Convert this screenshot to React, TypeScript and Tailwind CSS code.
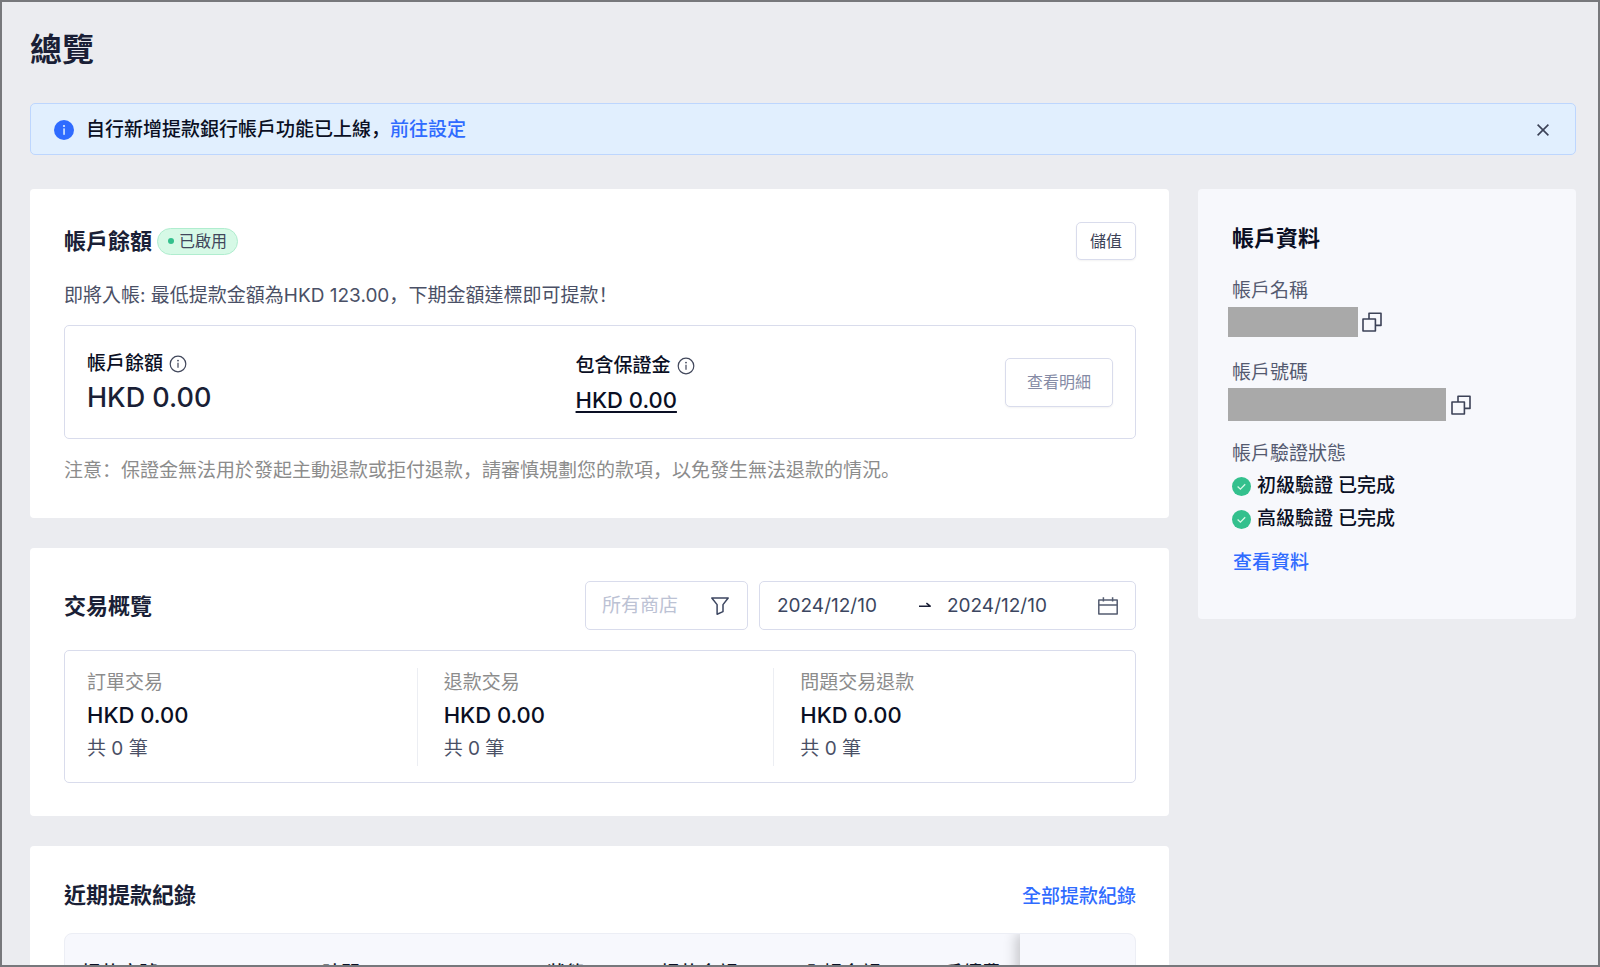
import type { ReactNode } from 'react';

const stats = [
  { label: '訂單交易', amount: 'HKD 0.00', count: '共 0 筆' },
  { label: '退款交易', amount: 'HKD 0.00', count: '共 0 筆' },
  { label: '問題交易退款', amount: 'HKD 0.00', count: '共 0 筆' },
];

function Punct({ children }: { children: ReactNode }) {
  return <span className="font-['Noto_Sans_CJK_SC',sans-serif] leading-none">{children}</span>;
}

function InfoFilledIcon() {
  return (
    <svg viewBox="0 0 20 20" className="h-5 w-5 shrink-0" aria-hidden="true">
      <circle cx="10" cy="10" r="10" fill="#2f6bff" />
      <circle cx="10" cy="6" r="1.1" fill="#e1effe" />
      <rect x="9.3" y="8.4" width="1.5" height="6.4" fill="#e1effe" />
    </svg>
  );
}

function InfoIcon() {
  return (
    <svg viewBox="0 0 18 18" className="h-[18px] w-[18px] shrink-0" fill="none" aria-hidden="true">
      <circle cx="9" cy="9" r="7.8" stroke="#41475b" strokeWidth="1.2" />
      <circle cx="9" cy="5.6" r="0.9" fill="#41475b" />
      <path d="M9 7.8v5" stroke="#41475b" strokeWidth="1.2" />
    </svg>
  );
}

function CloseIcon() {
  return (
    <svg viewBox="0 0 12 12" className="h-3 w-3" fill="none" aria-hidden="true">
      <path d="M.6.6l10.8 10.8M11.4.6L.6 11.4" stroke="#3c4257" strokeWidth="1.6" />
    </svg>
  );
}

function FilterIcon() {
  return (
    <svg viewBox="0 0 18 18" className="pointer-events-none h-[18px] w-[18px] shrink-0" fill="none" aria-hidden="true">
      <path d="M.8 1h16.4L12 7.6v7L6.1 17.2V7.6L.8 1z" stroke="#3c4660" strokeWidth="1.5" strokeLinejoin="round" />
    </svg>
  );
}

function CalendarIcon() {
  return (
    <svg viewBox="0 0 20 18" className="h-[18px] w-5 shrink-0" fill="none" aria-hidden="true">
      <path d="M.8 2.9h18.4v14.2H.8zM.8 8.1h18.4M5.4.2v4.2M14.6.2v4.2" stroke="#545c70" strokeWidth="1.5" strokeLinejoin="round" />
    </svg>
  );
}

function ArrowIcon() {
  return (
    <svg viewBox="0 0 13 8" className="h-2 w-[13px] shrink-0" fill="none" aria-hidden="true">
      <path d="M0 4.2h11.2L7.4 1.2" stroke="#1a1f36" strokeWidth="1.5" strokeLinejoin="round" />
    </svg>
  );
}

function CopyIcon() {
  return (
    <svg viewBox="0 0 20 20" className="h-5 w-5" fill="none" aria-hidden="true">
      <path d="M1 7h12.4v12H1zM7 7V1.2h12v12.2h-5.6" stroke="#3c4257" strokeWidth="1.6" strokeLinejoin="round" />
    </svg>
  );
}

function CheckIcon() {
  return (
    <svg viewBox="0 0 19 19" className="h-[19px] w-[19px] shrink-0" fill="none" aria-hidden="true">
      <circle cx="9.5" cy="9.5" r="9.5" fill="#33c08d" />
      <path d="M5.6 9.6l2.8 2.6 4.8-4.9" stroke="#d6f9e6" strokeWidth="1.3" />
    </svg>
  );
}

function Card({ children }: { children: ReactNode }) {
  return <section className="rounded bg-white py-[33px] pr-[33px] pl-[34px]">{children}</section>;
}

function CardTitle({ children }: { children: ReactNode }) {
  return <h2 className="text-[22px] leading-8 font-semibold text-[#1a1f36]">{children}</h2>;
}

export default function App() {
  return (
    <div className="h-screen overflow-hidden border-2 border-[#77787c] bg-[#ebecf0] pr-[22px] pl-7 font-['Inter','Noto_Sans_CJK_TC',sans-serif] text-[19px] leading-7 text-[#0a0f24]">
      <h1 className="pt-6 text-[32px] leading-[48px] font-bold text-[#1a1f36]">總覽</h1>

      <div className="mt-[29px] flex items-center rounded-[5px] border border-[#bdd6fe] bg-[#e1effe] pt-3 pb-[10px] pr-[22px] pl-[23px]">
        <InfoFilledIcon />
        <p className="ml-3 flex-1 font-medium">
          自行新增提款銀行帳戶功能已上線<Punct>，</Punct>
          <a href="#settings" className="text-[#2f6bff]">前往設定</a>
        </p>
        <button type="button" aria-label="關閉" className="p-1">
          <CloseIcon />
        </button>
      </div>

      <div className="mt-[34px] flex items-start gap-[29px]">
        <main className="flex min-w-0 flex-1 flex-col gap-[30px]">
          <Card>
            <div className="flex items-center">
              <CardTitle>帳戶餘額</CardTitle>
              <span className="ml-[5px] flex items-center gap-[5px] rounded-full border border-[#b0edcf] bg-[#d6f9e6] px-[10px] text-base leading-[25px] text-[#41475b]">
                <span className="h-1.5 w-1.5 rounded-full bg-[#33c08d]" />
                已啟用
              </span>
              <button type="button" className="ml-auto h-[38px] rounded-[5px] border border-[#d9dcec] bg-white px-[13px] text-base text-[#3c4257] shadow-xs">
                儲值
              </button>
            </div>
            <p className="mt-[21px] leading-[30px] text-[#4a5066]">
              即將入帳: 最低提款金額為HKD 123.00<Punct>，</Punct>下期金額達標即可提款<Punct>！</Punct>
            </p>
            <div className="mt-3.5 flex h-[114px] items-center rounded-[5px] border border-[#d9dcec] px-[22px]">
              <div className="grid flex-1 grid-cols-[10fr_11fr] items-center">
                <div className="pt-1">
                  <p className="flex items-center gap-1.5 font-medium">
                    帳戶餘額
                    <InfoIcon />
                  </p>
                  <p className="text-[27px] leading-10 font-medium text-[#1a1f36]">HKD 0.00</p>
                </div>
                <div className="flex items-center justify-between">
                  <div className="flex flex-col gap-1 pt-1">
                    <p className="flex items-center gap-1.5 font-medium">
                      包含保證金
                      <InfoIcon />
                    </p>
                    <a href="#deposit" className="self-start text-[22px] leading-8 font-medium underline decoration-2 underline-offset-3">HKD 0.00</a>
                  </div>
                  <button type="button" className="h-[49px] rounded-[5px] border border-[#d9dcec] bg-white px-[21px] text-base text-[#858ba5] shadow-xs">
                    查看明細
                  </button>
                </div>
              </div>
            </div>
            <p className="mt-[18px] text-[#8c8c8c]">
              注意<Punct>：</Punct>保證金無法用於發起主動退款或拒付退款<Punct>，</Punct>請審慎規劃您的款項<Punct>，</Punct>以免發生無法退款的情況<Punct>。</Punct>
            </p>
          </Card>

          <Card>
            <div className="flex items-center">
              <CardTitle>交易概覽</CardTitle>
              <label className="ml-auto flex h-[49px] items-center rounded-[5px] border border-[#d9dcec] pr-[18px] pl-4">
                <select aria-label="商店" className="w-[109px] appearance-none bg-transparent text-[#bcc2d4]">
                  <option>所有商店</option>
                </select>
                <FilterIcon />
              </label>
              <div className="ml-[11px] flex h-[49px] items-center rounded-[5px] border border-[#d9dcec] px-[17px] text-[#3c4660]">
                <input aria-label="開始日期" defaultValue="2024/12/10" className="w-[142px] bg-transparent" />
                <ArrowIcon />
                <input aria-label="結束日期" defaultValue="2024/12/10" className="ml-[15px] w-[151px] bg-transparent" />
                <CalendarIcon />
              </div>
            </div>
            <div className="mt-5 grid grid-cols-3 gap-[26px] rounded-[5px] border border-[#d9dcec] pt-[17px] pr-1 pb-4 pl-[22px]">
              {stats.map((stat) => (
                <div key={stat.label} className="border-r border-[#eceef3] last:border-transparent">
                  <p className="leading-[30px] text-[#8c8c8c]">{stat.label}</p>
                  <p className="text-[22px] leading-[34px] font-medium">{stat.amount}</p>
                  <p className="leading-[34px] text-[#4a5066]">{stat.count}</p>
                </div>
              ))}
            </div>
          </Card>

          <Card>
            <div className="flex items-end justify-between">
              <CardTitle>近期提款紀錄</CardTitle>
              <a href="#withdrawals" className="font-medium text-[#2f6bff]">全部提款紀錄</a>
            </div>
            <div className="mt-[22px] overflow-hidden rounded-lg border border-[#eceef5] bg-[#f7f8fd]">
              <table className="w-full table-fixed text-left">
                <colgroup>
                  <col />
                  <col className="w-[225px]" />
                  <col className="w-[114px]" />
                  <col className="w-[143px]" />
                  <col className="w-[140px]" />
                  <col className="w-[93px]" />
                  <col className="w-[115px]" />
                </colgroup>
                <thead>
                  <tr className="[&>th]:pt-[26px] [&>th]:pb-6 [&>th]:pl-[17px] [&>th]:font-medium">
                    <th>提款序號</th>
                    <th>時間</th>
                    <th>狀態</th>
                    <th>提款金額</th>
                    <th>入帳金額</th>
                    <th>手續費</th>
                    <th className="bg-[#f7f8fd] shadow-[-4px_0_12px_rgba(0,0,0,0.2)]" />
                  </tr>
                </thead>
              </table>
            </div>
          </Card>
        </main>

        <aside className="w-[378px] shrink-0 rounded bg-[#f7f8fc] px-[30px] pt-8 pb-[42px]">
          <h2 className="pl-1 text-[22px] leading-[34px] font-semibold">帳戶資料</h2>
          <p className="mt-[21px] pl-1 leading-[30px] text-[#545a70]">帳戶名稱</p>
          <div className="mt-px flex items-center gap-1">
            <span className="h-[30px] w-[130px] bg-[#a9a9a9]" />
            <button type="button" aria-label="複製帳戶名稱"><CopyIcon /></button>
          </div>
          <p className="mt-[21px] pl-1 leading-[30px] text-[#545a70]">帳戶號碼</p>
          <div className="flex items-center gap-[5px]">
            <span className="h-[33px] w-[218px] bg-[#a9a9a9]" />
            <button type="button" aria-label="複製帳戶號碼"><CopyIcon /></button>
          </div>
          <p className="mt-[18px] pl-1 leading-[30px] text-[#545a70]">帳戶驗證狀態</p>
          <ul className="pl-1 font-medium">
            <li className="mt-[3px] flex items-center gap-1.5"><CheckIcon />初級驗證 已完成</li>
            <li className="mt-[5px] flex items-center gap-1.5"><CheckIcon />高級驗證 已完成</li>
          </ul>
          <a href="#profile" className="mt-4 block pl-[5px] font-medium text-[#2f6bff]">查看資料</a>
        </aside>
      </div>
    </div>
  );
}
